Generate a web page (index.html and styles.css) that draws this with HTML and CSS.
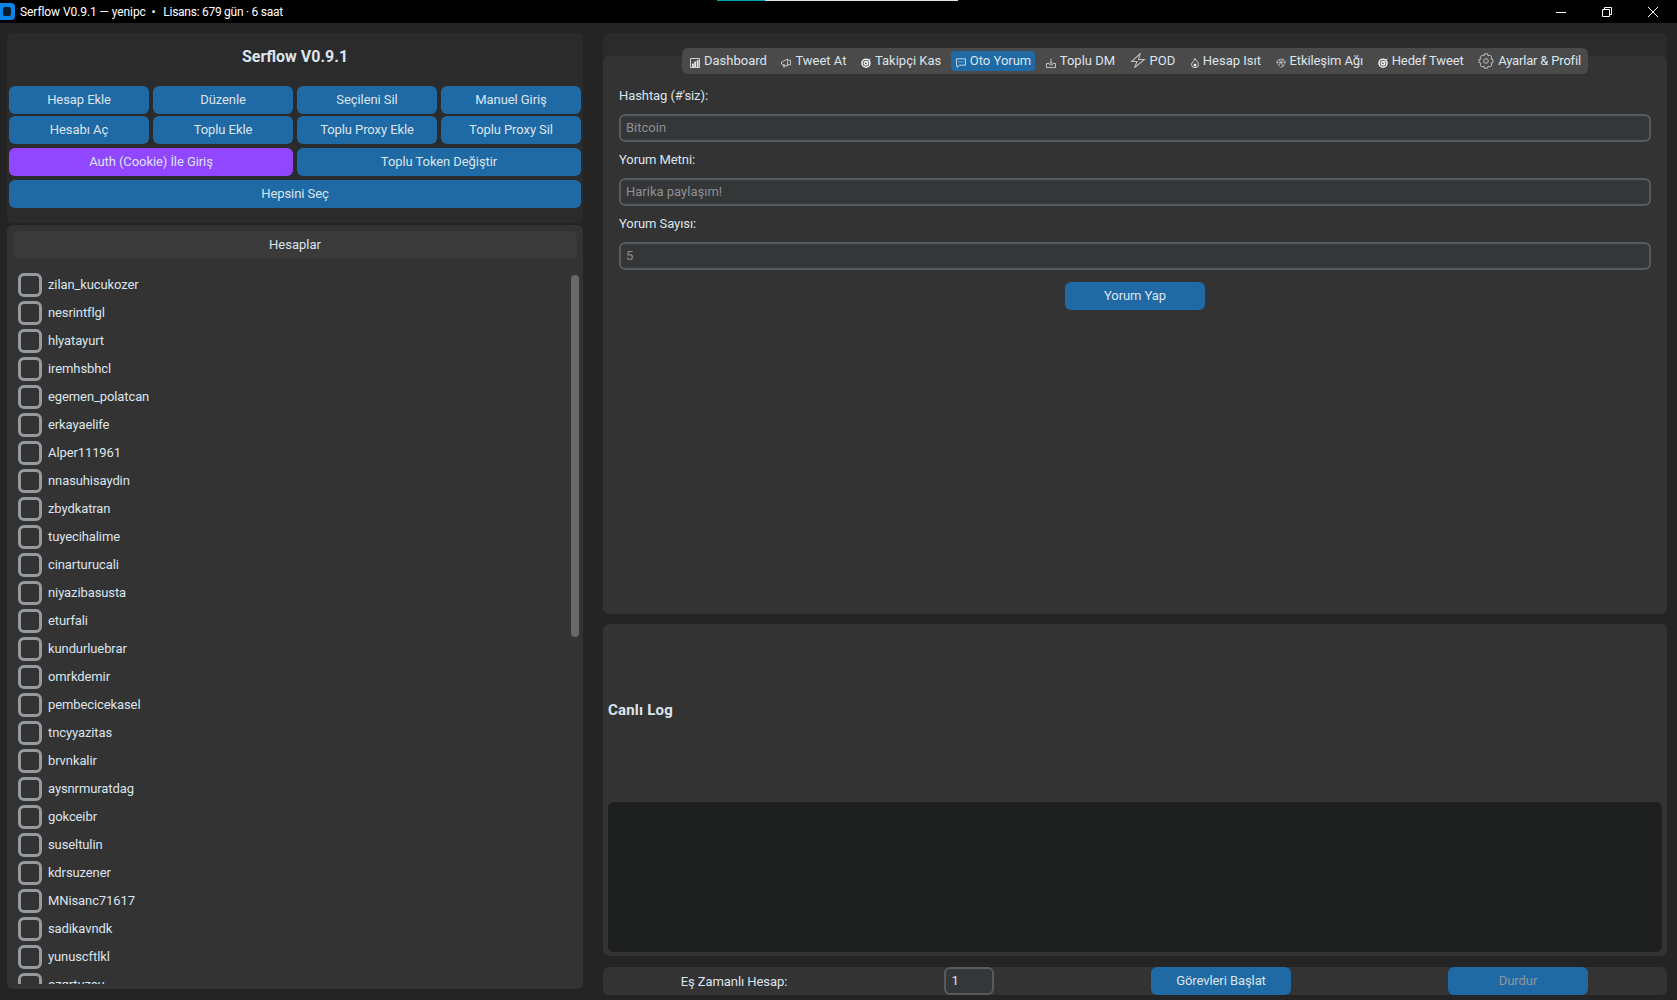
FILE: index.html
```html
<!DOCTYPE html>
<html lang="tr">
<head>
<meta charset="utf-8">
<title>Serflow V0.9.1</title>
<link rel="stylesheet" href="styles.css">
</head>
<body>
<div class="titlebar">
	<span class="app_icon"><span></span></span>
	<span class="title_text">Serflow V0.9.1 — yenipc &nbsp;•&nbsp; <span class="lic">Lisans: 679 gün · 6 saat</span></span>
	<div class="win_btns">
		<span class="win_btn"><svg width="10" height="10" viewBox="0 0 10 10"><path d="M0 5.5H10" stroke="#fff"/></svg></span>
		<span class="win_btn"><svg width="10" height="10" viewBox="0 0 10 10" fill="none" stroke="#fff"><path d="M.5 2.5h7v7h-7z"/><path d="M2.5 2.5v-2h7v7h-2"/></svg></span>
		<span class="win_btn"><svg width="10" height="10" viewBox="0 0 10 10"><path d="M0 0L10 10M10 0L0 10" stroke="#fff"/></svg></span>
	</div>
	<div class="top_strip"><span class="strip_a"></span><span class="strip_b"></span></div>
</div>

<div class="main">
	<div class="left">
		<div class="top_panel">
			<h1 class="app_name">Serflow V0.9.1</h1>
			<div class="btn_grid">
				<a class="btn">Hesap Ekle</a>
				<a class="btn">Düzenle</a>
				<a class="btn">Seçileni Sil</a>
				<a class="btn">Manuel Giriş</a>
				<a class="btn">Hesabı Aç</a>
				<a class="btn">Toplu Ekle</a>
				<a class="btn">Toplu Proxy Ekle</a>
				<a class="btn">Toplu Proxy Sil</a>
				<a class="btn purple span2">Auth (Cookie) İle Giriş</a>
				<a class="btn span2">Toplu Token Değiştir</a>
				<a class="btn span4">Hepsini Seç</a>
			</div>
		</div>
		<div class="accounts">
			<div class="accounts_head">Hesaplar</div>
			<ul class="acc_list">
				<li><i class="box"></i>zilan_kucukozer</li>
				<li><i class="box"></i>nesrintflgl</li>
				<li><i class="box"></i>hlyatayurt</li>
				<li><i class="box"></i>iremhsbhcl</li>
				<li><i class="box"></i>egemen_polatcan</li>
				<li><i class="box"></i>erkayaelife</li>
				<li><i class="box"></i>Alper111961</li>
				<li><i class="box"></i>nnasuhisaydin</li>
				<li><i class="box"></i>zbydkatran</li>
				<li><i class="box"></i>tuyecihalime</li>
				<li><i class="box"></i>cinarturucali</li>
				<li><i class="box"></i>niyazibasusta</li>
				<li><i class="box"></i>eturfali</li>
				<li><i class="box"></i>kundurluebrar</li>
				<li><i class="box"></i>omrkdemir</li>
				<li><i class="box"></i>pembecicekasel</li>
				<li><i class="box"></i>tncyyazitas</li>
				<li><i class="box"></i>brvnkalir</li>
				<li><i class="box"></i>aysnrmuratdag</li>
				<li><i class="box"></i>gokceibr</li>
				<li><i class="box"></i>suseltulin</li>
				<li><i class="box"></i>kdrsuzener</li>
				<li><i class="box"></i>MNisanc71617</li>
				<li><i class="box"></i>sadikavndk</li>
				<li><i class="box"></i>yunuscftlkl</li>
				<li><i class="box"></i>ozgrtuzcu</li>
			</ul>
			<div class="scroll_thumb"></div>
		</div>
	</div>

	<div class="right">
		<div class="tabview">
			<div class="tabbar">
				<span class="tab"><svg class="ico" viewBox="0 0 10 10"><path d="M.5.5h9v9h-9z" fill="none" stroke="#d0d0d0"/><path d="M2 9V5.500h1.800V9zM4.300 9V3.500h1.800V9zM6.800 9V2h1.800v7z" fill="#e8e8e8"/></svg>Dashboard</span>
				<span class="tab"><svg class="ico" viewBox="0 0 10 10" fill="none" stroke="#c0c0c0"><path d="M.5 4l6-3v7l-6-2zM6.500 2.500l3-.5v5l-3-.5M2 6.500l.5 2.500h1.500l-.5-2"/></svg>Tweet At</span>
				<span class="tab"><svg class="ico" viewBox="0 0 10 10" fill="none" stroke="#ececec" stroke-width="1.600"><circle cx="5" cy="5.200" r="4"/><circle cx="5" cy="5.200" r="1.700"/><path d="M5 5.200L9.500.8" stroke-width="1"/></svg>Takipçi Kas</span>
				<span class="tab on"><svg class="ico" viewBox="0 0 10 10" fill="none" stroke="#c4d8e8"><path d="M.5.8h9v6.400H3.500L1 9.400V7.200H.5z"/><path d="M2.500 4h1M4.500 4h1M6.500 4h1"/></svg>Oto Yorum</span>
				<span class="tab"><svg class="ico" viewBox="0 0 10 10" fill="none" stroke="#c0c0c0"><path d="M.5 5.500h2.500l1 1.500h2l1-1.500h2.500v4h-9zM5 .5v5M3.500 4L5 5.500 6.500 4"/></svg>Toplu DM</span>
				<span class="tab"><svg class="ico big pod" viewBox="0 0 15 14" fill="none" stroke="#c0c0c0"><path d="M9.500.5L1.500 8h5l-2 5.500L13.500 6h-5.500z"/></svg>POD</span>
				<span class="tab"><svg class="ico flame" viewBox="0 0 8 10" fill="none" stroke="#d0d0d0"><path d="M4 .5c.5 2 3.500 3.500 3.500 6a3.500 3.200 0 0 1-7 0c0-2 3-3.500 3.500-6z"/><circle cx="4" cy="7" r="1.500" fill="#e8e8e8" stroke="none"/></svg>Hesap Isıt</span>
				<span class="tab tight"><svg class="ico" viewBox="0 0 10 10" fill="none" stroke="#b8b8b8" stroke-width=".9"><path d="M3 1.500l4-.5 2.500 3L7 8.500 5 9.500 2.500 7 .5 4z"/><path d="M3 1.500L5 4.500 7 1M.5 4l4.500.5L9.500 4M2.500 7L5 4.500 7 8.500"/></svg>Etkileşim Ağı</span>
				<span class="tab tight"><svg class="ico" viewBox="0 0 10 10" fill="none" stroke="#ececec" stroke-width="1.600"><circle cx="5" cy="5.200" r="4"/><circle cx="5" cy="5.200" r="1.700"/><path d="M5 5.200L9.500.8" stroke-width="1"/></svg>Hedef Tweet</span>
				<span class="tab last"><svg class="ico big gear" viewBox="0 0 16 16" fill="none" stroke="#c0c0c0"><path d="M6.500.8h3l.5 2 1.800-.7 2.100 2.100-.9 1.800 2 .6v3l-2 .6.9 1.800-2.100 2.100-1.800-.9-.5 2h-3l-.5-2-1.800.9-2.100-2.100.9-1.800-2-.6v-3l2-.6-.9-1.800 2.100-2.100 1.800.7z"/><circle cx="8" cy="8" r="2.300"/></svg>Ayarlar &amp; Profil</span>
			</div>
			<div class="tab_body">
				<label class="field_label">Hashtag (#'siz):</label>
				<input class="entry" placeholder="Bitcoin">
				<label class="field_label">Yorum Metni:</label>
				<input class="entry" placeholder="Harika paylaşım!">
				<label class="field_label">Yorum Sayısı:</label>
				<input class="entry" placeholder="5">
				<a class="btn action">Yorum Yap</a>
			</div>
		</div>

		<div class="log_panel">
			<div class="log_title">Canlı Log</div>
			<div class="log_box"></div>
		</div>

		<div class="bottom_bar">
			<span class="bar_label">Eş Zamanlı Hesap:</span>
			<input class="entry small" value="1">
			<a class="btn action">Görevleri Başlat</a>
			<a class="btn action off">Durdur</a>
		</div>
	</div>
</div>
</body>
</html>
```

FILE: styles.css
```css
html, body {margin: 0; padding: 0; height: 1000px; overflow: hidden}
body {background: #242424; color: #dce4ee; font: 13px Roboto, "Liberation Sans", sans-serif; display: flex; flex-direction: column}
ul {margin: 0; padding: 0; list-style: none}

/* window title bar */
.titlebar {position: relative; height: 23px; flex: none; background: #000; color: #fff; display: flex; align-items: center; font-size: 12px}
.title_text {letter-spacing: -.08px}
.lic {letter-spacing: -.27px; margin-left: 2px}
.app_icon {width: 15px; height: 17px; margin-right: 5px; background: #0a84e8; border-radius: 0 4px 4px 0; display: flex; align-items: center; justify-content: center}
.app_icon span {width: 8px; height: 9px; background: #0b1a28; border-radius: 2px; margin-right: 1px}
.win_btns {margin-left: auto; display: flex; padding-right: 1px}
.win_btn {width: 46px; height: 23px; display: flex; align-items: center; justify-content: center}
.win_btn svg {display: block}
.top_strip {position: absolute; left: 717px; top: 0; display: flex; height: 1px}
.strip_a {width: 48px; background: #00a3b4}
.strip_b {width: 193px; background: #e4e4e4}

.main {flex: 1; min-height: 0; display: flex; gap: 20px; padding: 10px 10px 5px 7px}

/* left side */
.left {width: 576px; flex: none; display: flex; flex-direction: column; gap: 2px; padding-bottom: 6px}
.top_panel {height: 190px; flex: none; background: #2b2b2b; border-radius: 6px; padding: 0 2px; box-sizing: border-box}
.app_name {margin: 0 0 5px; height: 48px; line-height: 48px; text-align: center; font-size: 16px; font-weight: bold; color: #dce4ee}
.btn_grid {display: grid; grid-template-columns: repeat(4, 140px); column-gap: 4px; row-gap: 2px}
.btn {display: flex; align-items: center; justify-content: center; height: 28px; box-sizing: border-box; padding-bottom: 2px; background: #1f6aa5; color: #dce4ee; border-radius: 6px; cursor: pointer; letter-spacing: -.08px}
.purple {background: #9146ff}
.span2 {grid-column: span 2; margin-top: 2px}
.span4 {grid-column: span 4; margin-top: 2px}

.accounts {position: relative; flex: 1; min-height: 0; background: #333; border-radius: 6px; padding: 6px 6px 5px; display: flex; flex-direction: column}
.accounts_head {height: 28px; flex: none; box-sizing: border-box; padding-bottom: 1px; background: #3a3a3a; border-radius: 6px; display: flex; align-items: center; justify-content: center}
.acc_list {flex: 1; min-height: 0; overflow: hidden; margin-top: 11px; padding-left: 5px; letter-spacing: -.1px}
.acc_list li {height: 28px; display: flex; align-items: center; gap: 6px}
.box {width: 24px; height: 24px; margin-top: 2px; box-sizing: border-box; border: 3px solid #949a9f; border-radius: 6px; flex: none}
.scroll_thumb {position: absolute; left: 564px; top: 50px; width: 8px; height: 362px; background: #696969; border-radius: 4px}

/* right side */
.right {flex: 1; min-width: 0; display: flex; flex-direction: column}
.tabview {height: 581px; flex: none; background: #2b2b2b; border-radius: 6px; display: flex; flex-direction: column}
.tabbar {position: relative; z-index: 1; align-self: center; margin-top: 15px; width: 906px; height: 26px; box-sizing: border-box; padding: 3px; background: #4a4a4a; border-radius: 6px; display: flex; justify-content: space-between}
.tab {height: 20px; box-sizing: border-box; padding: 0 4.1px 2px 5px; display: flex; align-items: center; gap: 4px; border-radius: 4px; color: #dce4ee; white-space: nowrap}
.tab.tight {letter-spacing: -.1px}
.tab.last {letter-spacing: -.18px; padding-right: 4px}
.tab.on {background: #1f6aa5}
.ico {width: 10px; height: 10px; margin-top: 5px; flex: none}
.ico.big {margin-top: 1px}
.ico.pod {width: 16px; height: 15px}
.ico.gear {width: 16px; height: 16px}
.ico.flame {width: 8px; margin-left: 1px}
.tab_body {flex: 1; margin-top: -18px; background: #333; border-radius: 6px; padding: 26px 16px 0; display: flex; flex-direction: column}
.field_label {height: 28px; line-height: 28px; flex: none; margin-bottom: 4px; letter-spacing: -.08px}
.entry {display: block; height: 28px; flex: none; box-sizing: border-box; border: 2px solid #565b5e; border-radius: 6px; background: #343638; padding: 0 5px 2px; margin: 0 0 4px; color: #dce4ee; font: 13px Roboto, "Liberation Sans", sans-serif; outline: none}
.entry::placeholder {color: #8d9093; opacity: 1}
.entry.small {width: 50px; margin: 0; padding: 0 6px 2px}
.btn.action {width: 140px; flex: none}
.tab_body .btn.action {align-self: center; margin-top: 8px}
.btn.off {color: #8f969c}

.log_panel {height: 332px; flex: none; margin-top: 10px; background: #333; border-radius: 6px; padding: 0 5px 4px; box-sizing: border-box; display: flex; flex-direction: column}
.log_title {flex: 1; display: flex; align-items: center; font-size: 15px; font-weight: bold; letter-spacing: .2px; color: #dce4ee; margin-bottom: 6px}
.log_box {height: 150px; flex: none; background: #1d1e1e; border-radius: 6px}

.bottom_bar {margin-top: 11px; height: 28px; flex: none; background: #333; border-radius: 6px; display: grid; grid-template-columns: 262px 207px 298px 296px; justify-items: center; align-items: center}
.bar_label {letter-spacing: -.08px}
```
